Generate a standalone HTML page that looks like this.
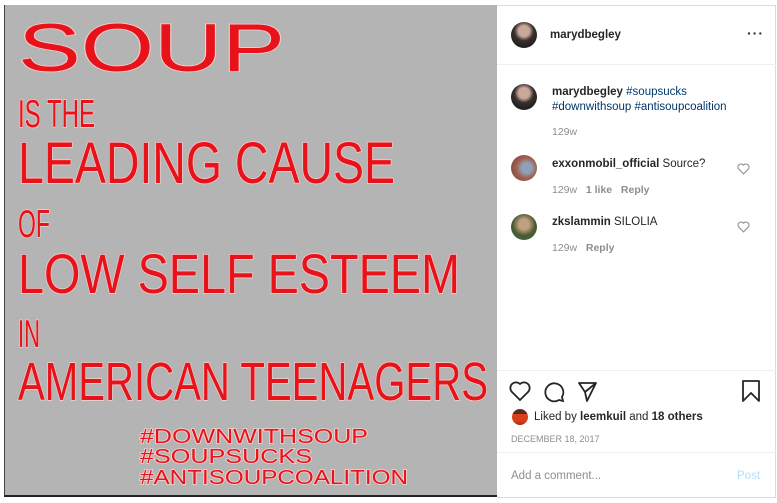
<!DOCTYPE html>
<html><head><meta charset="utf-8"><style>
*{margin:0;padding:0;box-sizing:border-box}
body{width:777px;height:503px;background:#fff;position:relative;overflow:hidden;font-family:"Liberation Sans",sans-serif;color:#262626;font-size:11.5px}
.img{position:absolute;left:4px;top:5px;width:493px;height:492px;background:#b4b4b4;border-left:1px solid #444;border-bottom:2px solid #222}
.panel{position:absolute;left:497px;top:5px;width:279px;height:493px;border:1px solid #dbdbdb;border-left:none}
.a{position:absolute;font-size:11.5px;white-space:nowrap}
.b{font-weight:bold}
.g{color:#8e8e8e;font-size:10.5px}
.h{color:#00376b}
.av{position:absolute;border-radius:50%}
</style></head><body>
<div class="img"></div>
<svg style="position:absolute;left:0;top:0" width="500" height="503">
<g font-family="Liberation Sans, sans-serif" fill="#e8121a" stroke="#f6d2d0" stroke-width="1.5" paint-order="stroke">
<text x="18" y="71" font-size="68" textLength="267" lengthAdjust="spacingAndGlyphs">SOUP</text>
<text x="18" y="127" font-size="39" textLength="77" lengthAdjust="spacingAndGlyphs">IS THE</text>
<text x="18" y="183" font-size="58" textLength="377" lengthAdjust="spacingAndGlyphs">LEADING CAUSE</text>
<text x="18" y="237" font-size="39" textLength="32" lengthAdjust="spacingAndGlyphs">OF</text>
<text x="18" y="293" font-size="56" textLength="442" lengthAdjust="spacingAndGlyphs">LOW SELF ESTEEM</text>
<text x="18" y="347" font-size="39" textLength="22" lengthAdjust="spacingAndGlyphs">IN</text>
<text x="18" y="400" font-size="54" textLength="470" lengthAdjust="spacingAndGlyphs">AMERICAN TEENAGERS</text>
<text x="140" y="443" font-size="20" textLength="228" lengthAdjust="spacingAndGlyphs">#DOWNWITHSOUP</text>
<text x="140" y="463" font-size="20" textLength="172" lengthAdjust="spacingAndGlyphs">#SOUPSUCKS</text>
<text x="140" y="484" font-size="20" textLength="268" lengthAdjust="spacingAndGlyphs">#ANTISOUPCOALITION</text>
</g></svg>
<div class="panel"></div>
<div style="position:absolute;left:497px;top:64px;width:279px;border-top:1px solid #efefef"></div>
<div class="av" style="left:511px;top:22px;width:26px;height:26px;background:radial-gradient(circle at 50% 35%,#c9a89a 0 25%,#3a3030 45%,#222 70%)"></div>
<div class="a b" style="left:550px;top:29px">marydbegley</div>
<div class="a b" style="left:747px;top:25px;font-size:14px;letter-spacing:1px">···</div>
<div class="av" style="left:511px;top:84px;width:26px;height:26px;background:radial-gradient(circle at 50% 35%,#c9a89a 0 25%,#3a3030 45%,#222 70%)"></div>
<div class="a" style="left:552px;top:86px"><b>marydbegley</b> <span class="h">#soupsucks</span></div>
<div class="a h" style="left:552px;top:101px">#downwithsoup #antisoupcoalition</div>
<div class="a g" style="left:552px;top:126px">129w</div>
<div class="av" style="left:511px;top:155px;width:26px;height:26px;background:radial-gradient(circle at 60% 50%,#8fa0b8 0 25%,#a06050 50%,#704038)"></div>
<div class="a" style="left:552px;top:158px"><b>exxonmobil_official</b> Source?</div>
<div class="a g" style="left:552px;top:184px">129w &nbsp; <b>1 like</b> &nbsp; <b>Reply</b></div>
<div class="av" style="left:511px;top:214px;width:26px;height:26px;background:radial-gradient(circle at 50% 40%,#c0a080 0 25%,#4a5a30 55%,#3a6a50)"></div>
<div class="a" style="left:552px;top:216px"><b>zkslammin</b> SILOLIA</div>
<div class="a g" style="left:552px;top:242px">129w &nbsp; <b>Reply</b></div>
<svg style="position:absolute;left:737px;top:163px" width="13" height="12" viewBox="0 0 24 22"><path d="M12 20 3 11a5 5 0 0 1 9-7 5 5 0 0 1 9 7z" fill="none" stroke="#8e8e8e" stroke-width="2"/></svg>
<svg style="position:absolute;left:737px;top:221px" width="13" height="12" viewBox="0 0 24 22"><path d="M12 20 3 11a5 5 0 0 1 9-7 5 5 0 0 1 9 7z" fill="none" stroke="#8e8e8e" stroke-width="2"/></svg>
<div style="position:absolute;left:497px;top:370px;width:279px;border-top:1px solid #efefef"></div>
<svg style="position:absolute;left:509px;top:380px" width="260" height="24">
<path d="M11 20 3 12a5.5 5.5 0 0 1 8-8 5.5 5.5 0 0 1 8 8z" fill="none" stroke="#262626" stroke-width="1.8"/>
<path d="M53 17a9 9 0 1 0-3 3l4 1z" fill="none" stroke="#262626" stroke-width="1.8"/>
<path d="M70 3h17l-9 18-2-9z M76 12l11-9" fill="none" stroke="#262626" stroke-width="1.8" stroke-linejoin="round"/>
<path d="M234 1h16v20l-8-8-8 8z" fill="none" stroke="#262626" stroke-width="1.8" stroke-linejoin="round"/>
</svg>
<div class="av" style="left:512px;top:409px;width:16px;height:16px;background:linear-gradient(#5a2a20 0 30%,#d8401c 30% 75%,#a03018)"></div>
<div class="a" style="left:534px;top:411px">Liked by <b>leemkuil</b> and <b>18 others</b></div>
<div class="a" style="left:511px;top:434px;font-size:9px;color:#8e8e8e">DECEMBER 18, 2017</div>
<div style="position:absolute;left:497px;top:452px;width:279px;border-top:1px solid #efefef"></div>
<div class="a" style="left:511px;top:470px;color:#8e8e8e">Add a comment...</div>
<div class="a" style="left:737px;top:470px;color:#b2dffc">Post</div>
</body></html>
